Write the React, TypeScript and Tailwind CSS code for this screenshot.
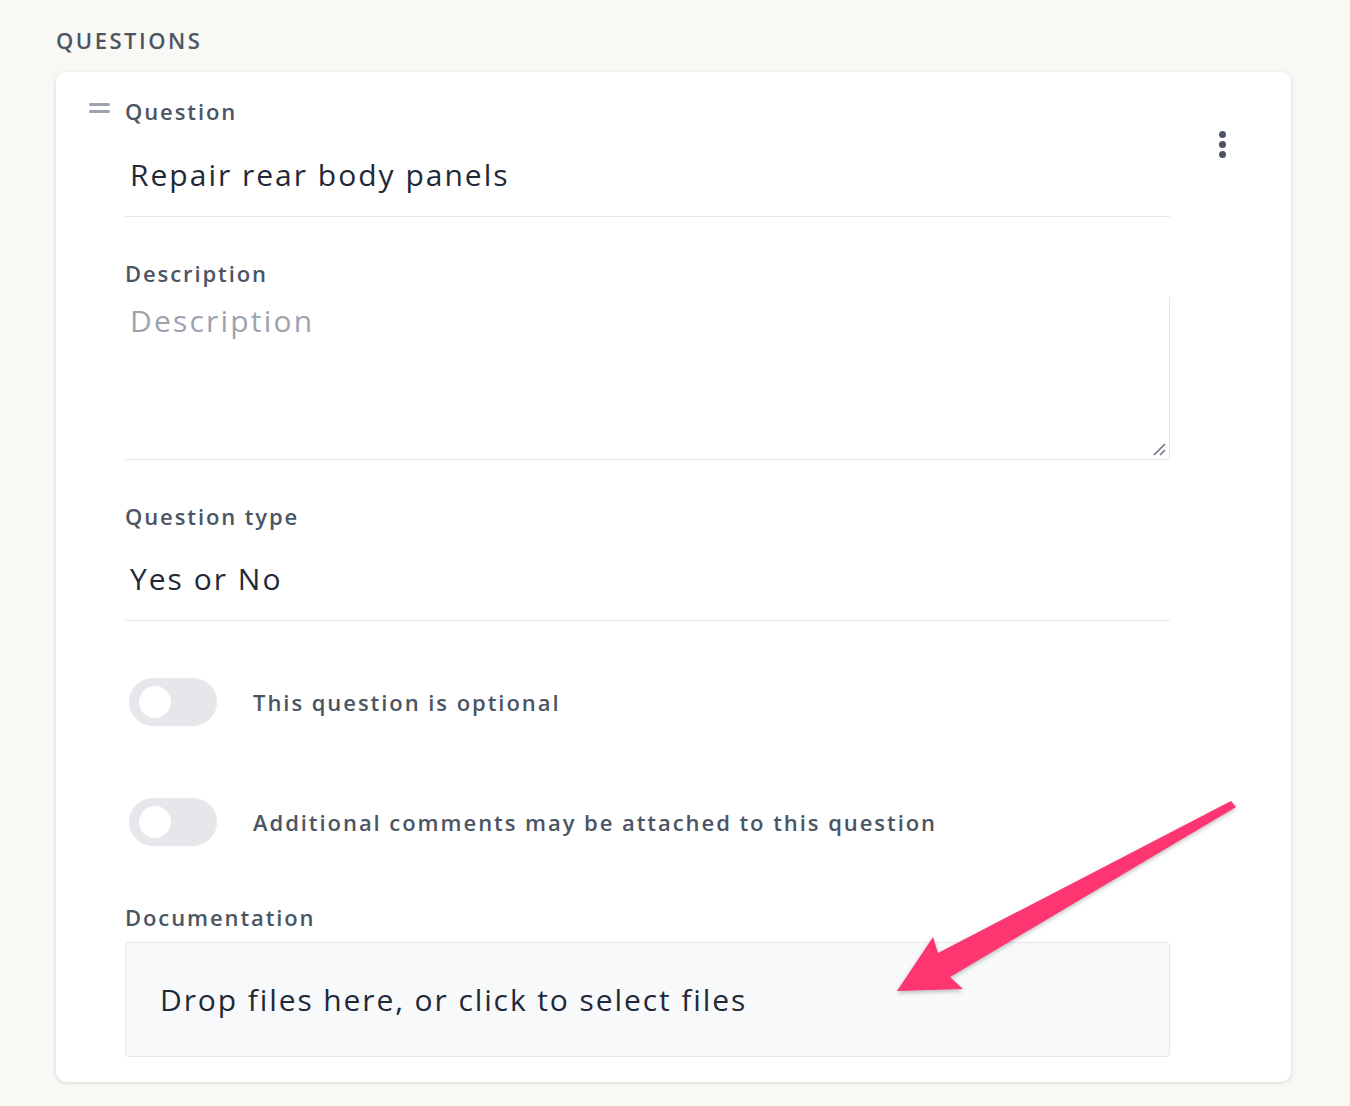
import React from "react";

const font = "font-['Open_Sans','Liberation_Sans',sans-serif]";

const Toggle = ({ label }: { label: string }) => {
  return (
    <div className="flex items-center ml-[4px] h-[48px]">
      <div className="relative w-[88px] h-[48px] rounded-full bg-[#e5e7eb] shrink-0">
        <div className="absolute left-[10px] top-[8px] w-[32px] h-[32px] rounded-full bg-white" />
      </div>
      <span className="ml-[36px] text-[22px] font-semibold text-[#4b5563] tracking-[1.95px]">
        {label}
      </span>
    </div>
  );
};

const Label = ({ children }: { children: React.ReactNode }) => (
  <div className="text-[22px] leading-[28px] font-semibold text-[#4b5563] tracking-[1.9px]">
    {children}
  </div>
);

export default function App() {
  return (
    <div className={`min-h-[1106px] bg-[#f9f8f5] ${font} relative`}>
      <div className="pl-[56px] pr-[59px] pt-[26px]">
        <h2 className="text-[22px] leading-[28px] font-semibold text-[#4b5563] tracking-[2.5px]">
          QUESTIONS
        </h2>
        <div className="mt-[18px] bg-white rounded-[10px] shadow-[0_1px_4px_rgba(0,0,0,0.14)] flex pt-[25px] pb-[25px]">
          {/* drag handle */}
          <div className="w-[69px] shrink-0 pl-[33px] pt-[6px]">
            <div className="w-[21px] h-[3px] rounded-full bg-[#9ca3af]" />
            <div className="w-[21px] h-[3px] rounded-full bg-[#9ca3af] mt-[4px]" />
          </div>

          <div className="flex-1 flex flex-col">
            <Label>Question</Label>
            <div className="pt-[30px] pb-[21px] border-b border-[#e5e7eb]">
              <div className="pl-[5px] text-[30px] leading-[40px] text-[#1f2937] tracking-[2px]">
                Repair rear body panels
              </div>
            </div>

            <div className="mt-[42px]">
              <Label>Description</Label>
            </div>
            <div className="relative mt-[10px] h-[163px] border-r border-b border-[#e5e7eb]">
              <div className="pl-[5px] pt-[4px] text-[30px] leading-[40px] text-[#9ca3af] tracking-[2.2px]">
                Description
              </div>
              <svg
                className="absolute right-[3px] bottom-[3px]"
                width="14"
                height="14"
                viewBox="0 0 14 14"
              >
                <path d="M2 13 L13 2 M8 13 L13 8" stroke="#6b7280" strokeWidth="1.6" />
              </svg>
            </div>

            <div className="mt-[42px]">
              <Label>Question type</Label>
            </div>
            <div className="pt-[29px] pb-[21px] border-b border-[#e5e7eb]">
              <div className="pl-[5px] text-[30px] leading-[40px] text-[#1f2937] tracking-[2px]">
                Yes or No
              </div>
            </div>

            <div className="mt-[57px]">
              <Toggle label="This question is optional" />
            </div>
            <div className="mt-[72px]">
              <Toggle label="Additional comments may be attached to this question" />
            </div>

            <div className="mt-[57px]">
              <Label>Documentation</Label>
            </div>
            <div className="mt-[11px] h-[115px] bg-[#f8f9fb] border border-[#e5e7eb] rounded-[4px] flex items-center pl-[34px]">
              <span className="text-[30px] leading-[40px] text-[#1f2937] tracking-[1.9px]">
                Drop files here, or click to select files
              </span>
            </div>
          </div>

          {/* kebab */}
          <div className="w-[121px] shrink-0 flex justify-center pt-[34px] pr-[17px]">
            <div className="flex flex-col gap-[3px]">
              <div className="w-[7px] h-[7px] rounded-full bg-[#4b5563]" />
              <div className="w-[7px] h-[7px] rounded-full bg-[#4b5563]" />
              <div className="w-[7px] h-[7px] rounded-full bg-[#4b5563]" />
            </div>
          </div>
        </div>
      </div>

      {/* annotation arrow */}
      <svg
        className="absolute left-0 top-0 pointer-events-none"
        width="1350"
        height="1106"
        viewBox="0 0 1350 1106"
        style={{ filter: "drop-shadow(0 2px 2px rgba(0,0,0,0.25))" }}
      >
        <polygon
          points="1231,801 1236,807 950,977 963,989 897,991 933,937 938,953"
          fill="#fd3571"
          strokeLinejoin="round"
        />
      </svg>
    </div>
  );
}
